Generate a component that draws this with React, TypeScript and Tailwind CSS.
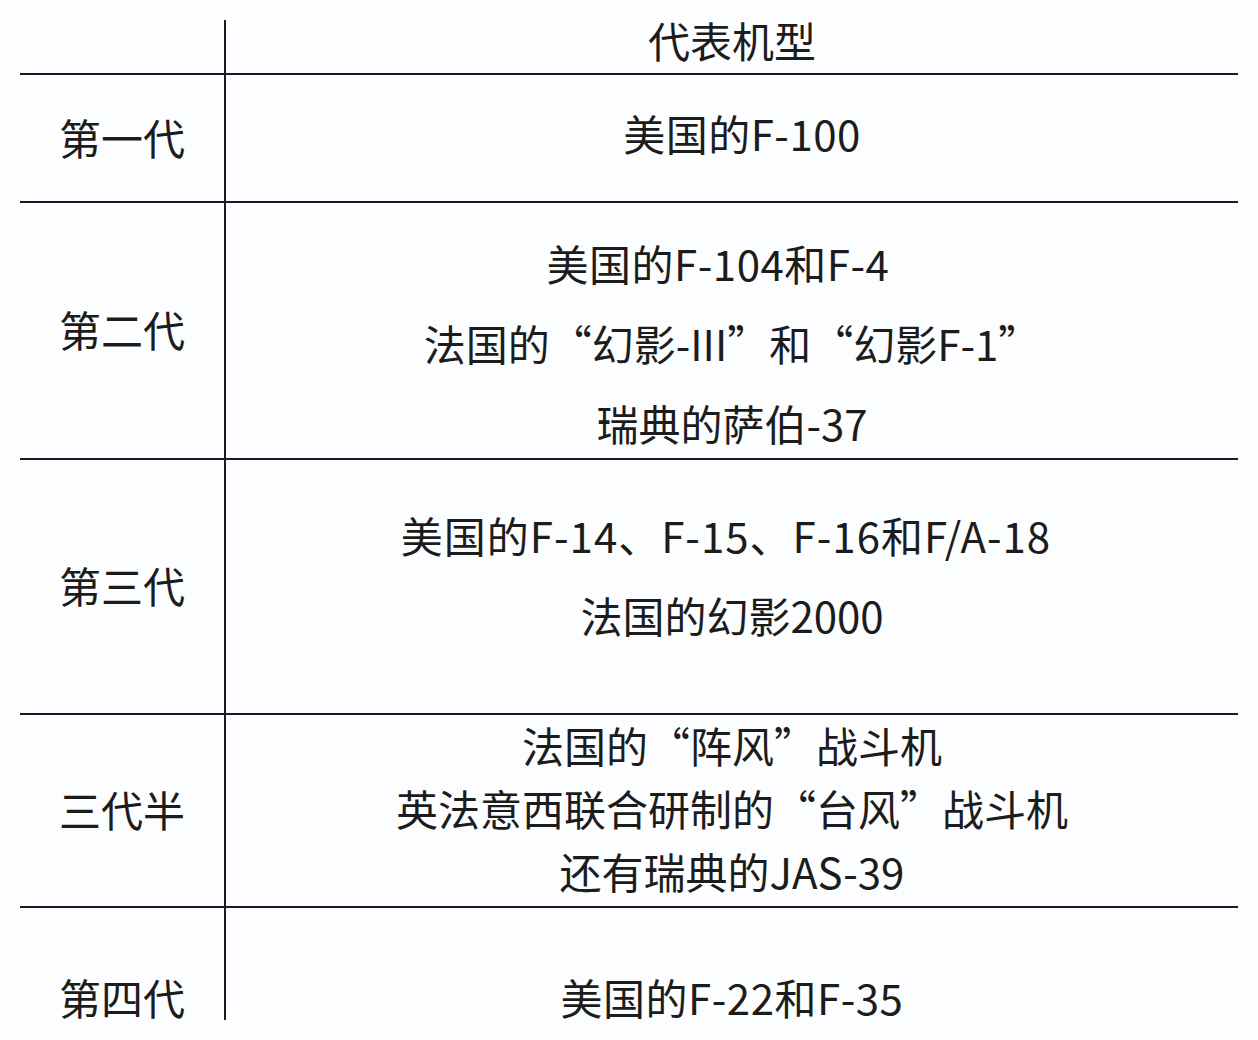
import React from "react";

const font = { fontFamily: '"Noto Sans CJK SC", "Noto Sans", sans-serif' };

export default function App() {
  return (
    <div className="w-[1258px] h-[1040px] overflow-hidden bg-[#fcfdfe] text-[#1c1c1c] pt-[20px] px-[20px]" style={font}>
      <div className="flex flex-col w-[1218px] text-[42px]">
        {/* header */}
        <div className="flex h-[55px] border-b-2 border-[#1a1a22]">
          <div className="w-[206px] border-r-2 border-[#1a1a22]" />
          <div className="flex-1 flex flex-col items-center leading-[40px]">
            <div>代表机型</div>
          </div>
        </div>
        {/* row 1 */}
        <div className="flex h-[128px] border-b-2 border-[#1a1a22]">
          <div className="w-[206px] border-r-2 border-[#1a1a22] flex items-center justify-center pb-[4px]">第一代</div>
          <div className="flex-1 flex flex-col items-center leading-[80px] pt-[18px]">
            <div className="ml-[20px] tracking-[0.5px]">美国的F-100</div>
          </div>
        </div>
        {/* row 2 */}
        <div className="flex h-[257px] border-b-2 border-[#1a1a22]">
          <div className="w-[206px] border-r-2 border-[#1a1a22] flex items-center justify-center pb-[4px]">第二代</div>
          <div className="flex-1 flex flex-col items-center leading-[80px] pt-[20px]">
            <div className="mr-[28px] tracking-[0.5px]">美国的F-104和F-4</div>
            <div>法国的“幻影-III”和“幻影F-1”</div>
            <div>瑞典的萨伯-37</div>
          </div>
        </div>
        {/* row 3 */}
        <div className="flex h-[255px] border-b-2 border-[#1a1a22]">
          <div className="w-[206px] border-r-2 border-[#1a1a22] flex items-center justify-center pb-[4px]">第三代</div>
          <div className="flex-1 flex flex-col items-center leading-[80px] pt-[35px]">
            <div className="mr-[12px] tracking-[1px]">美国的F-14、F-15、F-16和F/A-18</div>
            <div>法国的幻影2000</div>
          </div>
        </div>
        {/* row 4 */}
        <div className="flex h-[193px] border-b-2 border-[#1a1a22]">
          <div className="w-[206px] border-r-2 border-[#1a1a22] flex items-center justify-center pb-[4px]">三代半</div>
          <div className="flex-1 flex flex-col items-center leading-[63px] -mt-[2px]">
            <div>法国的“阵风”战斗机</div>
            <div>英法意西联合研制的“台风”战斗机</div>
            <div>还有瑞典的JAS-39</div>
          </div>
        </div>
        {/* row 5 */}
        <div className="flex h-[112px]">
          <div className="w-[206px] border-r-2 border-[#1a1a22] flex flex-col items-center leading-[80px] pt-[49px]">
            <div>第四代</div>
          </div>
          <div className="flex-1 flex flex-col items-center leading-[80px] pt-[49px]">
            <div className="tracking-[0.5px]">美国的F-22和F-35</div>
          </div>
        </div>
      </div>
    </div>
  );
}
